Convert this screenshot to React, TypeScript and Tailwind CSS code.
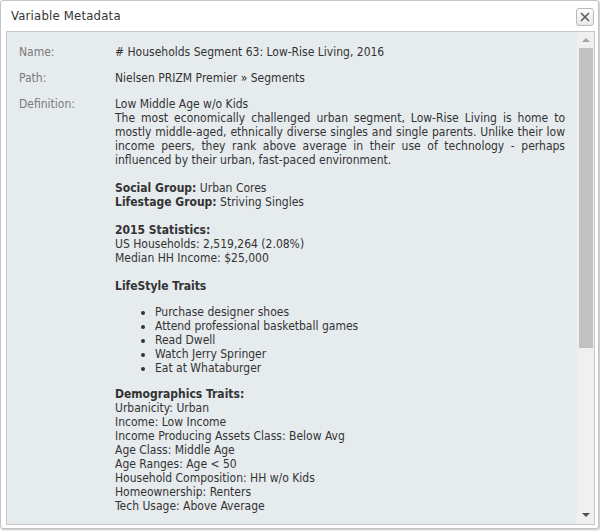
const font = { fontFamily: "'DejaVu Sans Condensed', 'DejaVu Sans', Tahoma, sans-serif" }

function Row({ label, children }: { label: string; children: React.ReactNode }) {
  return (
    <div className="flex">
      <div className="w-[96px] shrink-0 text-[#7b7b7b]">{label}</div>
      <div className="flex-1 text-[#333]">{children}</div>
    </div>
  )
}

function Scrollbar() {
  return (
    <div className="w-[17px] shrink-0 bg-[#f0f0f0] flex flex-col items-center">
      <div className="h-[16px] w-full flex items-center justify-center">
        <div className="w-0 h-0 border-l-[4px] border-r-[4px] border-b-[4px] border-l-transparent border-r-transparent border-b-[#a3a3a3]" />
      </div>
      <div className="w-[14px] h-[300px] bg-[#c1c1c1]" />
      <div className="flex-1" />
      <div className="h-[18px] w-full flex items-center justify-center">
        <div className="w-0 h-0 border-l-[4px] border-r-[4px] border-t-[4px] border-l-transparent border-r-transparent border-t-[#505050]" />
      </div>
    </div>
  )
}

export default function App() {
  const traits = [
    'Purchase designer shoes',
    'Attend professional basketball games',
    'Read Dwell',
    'Watch Jerry Springer',
    'Eat at Whataburger',
  ]
  const demo = [
    'Urbanicity: Urban',
    'Income: Low Income',
    'Income Producing Assets Class: Below Avg',
    'Age Class: Middle Age',
    'Age Ranges: Age < 50',
    'Household Composition: HH w/o Kids',
    'Homeownership: Renters',
    'Tech Usage: Above Average',
  ]

  return (
    <div className="w-[600px] h-[531px] bg-white" style={font}>
      <div className="w-[599px] h-[529px] bg-white border border-[#c4c4c4] rounded-[3px] shadow-[1px_1px_2px_rgba(0,0,0,0.25)] flex flex-col">
        <div className="h-[30px] shrink-0 flex items-center justify-between pl-[10px] pr-[4px]">
          <span className="text-[13px] text-[#333] tracking-[0.2px]">Variable Metadata</span>
          <button className="w-[18px] h-[18px] mt-[1px] rounded-[3px] border border-[#b9b9b9] bg-gradient-to-b from-[#fdfdfd] to-[#e8e8e8] flex items-center justify-center">
            <svg width="10" height="10" viewBox="0 0 10 10">
              <path d="M1 1L9 9M9 1L1 9" stroke="#5a5a5a" strokeWidth="1.6" />
            </svg>
          </button>
        </div>
        <div className="ml-[5px] mr-[3px] h-[494px] border border-[#c8c8c8] bg-[#e6ebee] flex overflow-hidden">
          <div className="flex-1 overflow-hidden pl-[12px] pr-[12px] pt-[13px] text-[12px] leading-[14px] flex flex-col gap-[12px]">
            <Row label="Name:"># Households Segment 63: Low-Rise Living, 2016</Row>
            <Row label="Path:">Nielsen PRIZM Premier » Segments</Row>
            <Row label="Definition:">
              <div>Low Middle Age w/o Kids</div>
              <div className="text-justify">
                The most economically challenged urban segment, Low-Rise Living is home to mostly middle-aged,
                ethnically diverse singles and single parents. Unlike their low income peers, they rank above
                average in their use of technology - perhaps influenced by their urban, fast-paced environment.
              </div>
              <br />
              <div><b>Social Group:</b> Urban Cores</div>
              <div><b>Lifestage Group:</b> Striving Singles</div>
              <br />
              <div><b>2015 Statistics:</b></div>
              <div>US Households: 2,519,264 (2.08%)</div>
              <div>Median HH Income: $25,000</div>
              <br />
              <div><b>LifeStyle Traits</b></div>
              <ul className="list-disc pl-[40px] my-[12px]">
                {traits.map((t) => (
                  <li key={t}>{t}</li>
                ))}
              </ul>
              <div><b>Demographics Traits:</b></div>
              {demo.map((d) => (
                <div key={d}>{d}</div>
              ))}
            </Row>
          </div>
          <Scrollbar />
        </div>
      </div>
    </div>
  )
}
